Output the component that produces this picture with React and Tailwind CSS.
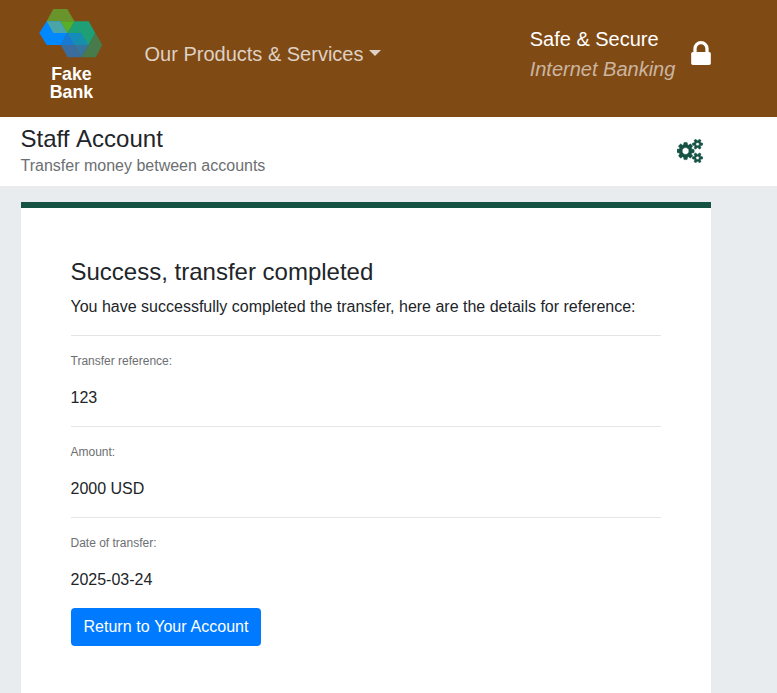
function Logo() {
  return (
    <div className="flex w-16 flex-col items-center">
      <svg className="block h-[50px] w-16" viewBox="0 0 192 150">
        <polygon points="43,0 85,0 106,37 23,37" fill="#69942b" />
        <polygon points="23,37 65,37 85,72 66,108 23,108 1,72" fill="#0088ff" />
        <polygon points="23,37 65,37 85,72 43,72" fill="#4aa5a8" />
        <polygon points="105,37 149,37 169,72 149,108 105,108 85,72" fill="#1f9f76" />
        <polygon points="65,37 106,37 85,72" fill="#58b029" />
        <polygon points="169,72 190,108 170,145 127,145 149,108" fill="#487b4c" />
        <polygon points="85,72 127,72 106,108 65,108" fill="#1779cf" />
        <polygon points="127,72 149,108 106,108" fill="#168fac" />
        <polygon points="85,72 127,72 106,108" fill="#158bbb" />
        <polygon points="65,108 106,108 127,145 86,145" fill="#3b6c9e" />
        <polygon points="106,108 149,108 127,145" fill="#34759f" />
      </svg>
      <div className="mt-[6px] pl-px text-center text-[17.8px] leading-[18.4px] font-bold text-white">
        <div>Fake</div>
        <div>Bank</div>
      </div>
    </div>
  );
}

function LockIcon() {
  return (
    <svg className="mt-[41px] h-6 w-5 text-white" viewBox="0 128 1152 1408" fill="currentColor">
      <path d="M320 768h512v-192q0-106-75-181t-181-75-181 75-75 181v192zm832 96v576q0 40-28 68t-68 28h-960q-40 0-68-28t-28-68v-576q0-40 28-68t68-28h32v-192q0-184 132-316t316-132 316 132 132 316v192h32q40 0 68 28t28 68z" />
    </svg>
  );
}

function CogsIcon() {
  return (
    <svg className="mt-[22px] h-6 w-[25.7px] text-[#155243]" viewBox="0 0 1920 1792" fill="currentColor" stroke="currentColor" strokeWidth="40">
      <path d="M896 896q0-106-75-181t-181-75-181 75-75 181 75 181 181 75 181-75 75-181zm768 512q0-52-38-90t-90-38-90 38-38 90q0 53 37.5 90.5t90.5 37.5 90.5-37.5 37.5-90.5zm0-1024q0-52-38-90t-90-38-90 38-38 90q0 53 37.5 90.5t90.5 37.5 90.5-37.5 37.5-90.5zm-384 421v185q0 10-7 19.5t-16 10.5l-155 24q-11 35-32 76 34 48 90 115 7 11 7 20 0 12-7 19-23 30-82.5 89.5t-78.5 59.5q-11 0-21-7l-115-90q-37 19-77 31-11 108-23 155-7 24-30 24h-186q-11 0-20-7.5t-10-17.5l-23-153q-34-10-75-31l-118 89q-7 7-20 7-11 0-21-8-144-133-144-160 0-9 7-19 10-14 41-53t47-61q-23-44-35-82l-152-24q-10-1-17-9.5t-7-19.5v-185q0-10 7-19.5t16-10.5l155-24q11-35 32-76-34-48-90-115-7-11-7-20 0-12 7-20 22-30 82-89t79-59q11 0 21 7l115 90q34-18 77-32 11-108 23-154 7-24 30-24h186q11 0 20 7.5t10 17.5l23 153q34 10 75 31l118-89q8-7 20-7 11 0 21 8 144 133 144 160 0 8-7 19-12 16-42 54t-45 60q23 48 34 82l152 23q10 2 17 10.5t7 19.5zm640 533v140q0 16-149 31-12 27-30 52 51 113 51 138 0 4-4 7-122 71-124 71-8 0-46-47t-52-68q-20 2-30 2t-30-2q-14 21-52 68t-46 47q-2 0-124-71-4-3-4-7 0-25 51-138-18-25-30-52-149-15-149-31v-140q0-16 149-31 13-29 30-52-51-113-51-138 0-4 4-7 4-2 35-20t59-34 30-16q8 0 46 46.5t52 67.5q20-2 30-2t30 2q51-71 92-112l6-2q4 0 124 70 4 3 4 7 0 25-51 138 17 23 30 52 149 15 149 31zm0-1024v140q0 16-149 31-12 27-30 52 51 113 51 138 0 4-4 7-122 71-124 71-8 0-46-47t-52-68q-20 2-30 2t-30-2q-14 21-52 68t-46 47q-2 0-124-71-4-3-4-7 0-25 51-138-18-25-30-52-149-15-149-31v-140q0-16 149-31 13-29 30-52-51-113-51-138 0-4 4-7 4-2 35-20t59-34 30-16q8 0 46 46.5t52 67.5q20-2 30-2t30 2q51-71 92-112l6-2q4 0 124 70 4 3 4 7 0 25-51 138 17 23 30 52 149 15 149 31z" />
    </svg>
  );
}

function Detail({ label, value }) {
  return (
    <div className="h-[91px] border-t border-black/10 pt-4">
      <div className="text-xs leading-[18px] text-[#6c6f72]">{label}</div>
      <div className="mt-4 text-base leading-6">{value}</div>
    </div>
  );
}

export default function App() {
  return (
    <div className="flex h-[693px] w-[777px] flex-col overflow-hidden bg-[#e8ecef] font-['Liberation_Sans',Arial,sans-serif] text-[#212529]">
      <header className="flex h-[117px] shrink-0 bg-[#804a15] pl-[39px]">
        <div className="pt-[9px]">
          <Logo />
        </div>
        <div className="ml-[41.5px] flex w-[385.2px] items-start pt-[39px] text-xl leading-[30px] text-white/75">
          <span className="whitespace-nowrap">Our Products &amp; Services</span>
          <span className="mt-[11px] ml-[6px] border-x-[6px] border-t-[6px] border-x-transparent border-t-current" />
        </div>
        <div className="w-[161.3px] pt-6 text-xl leading-[30px] whitespace-nowrap text-white">
          <div>Safe &amp; Secure</div>
          <div className="text-white/60 italic">Internet Banking</div>
        </div>
        <LockIcon />
      </header>
      <section className="flex h-[69px] shrink-0 justify-between bg-white pr-[74.3px] pl-[20.5px]">
        <div className="pt-[7px]">
          <h1 className="text-2xl leading-[29px] [word-spacing:1.33px]">Staff Account</h1>
          <p className="mt-px text-base leading-6 text-[#6c6f72]">Transfer money between accounts</p>
        </div>
        <CogsIcon />
      </section>
      <main className="mt-4 ml-[20.5px] w-[690.5px] flex-1 border-t-[6px] border-[#155243] bg-white px-[50px] pt-[49px]">
        <h2 className="text-2xl leading-[29px]">Success, transfer completed</h2>
        <p className="mt-[9px] mb-4 text-base leading-6">
          You have successfully completed the transfer, here are the details for reference:
        </p>
        <Detail label="Transfer reference:" value="123" />
        <Detail label="Amount:" value="2000 USD" />
        <Detail label="Date of transfer:" value="2025-03-24" />
        <button className="h-[38px] w-[190.5px] rounded bg-[#007bff] pl-[13px] text-left text-base leading-6 whitespace-nowrap text-white [word-spacing:0.4px]">
          Return to Your Account
        </button>
      </main>
    </div>
  );
}
